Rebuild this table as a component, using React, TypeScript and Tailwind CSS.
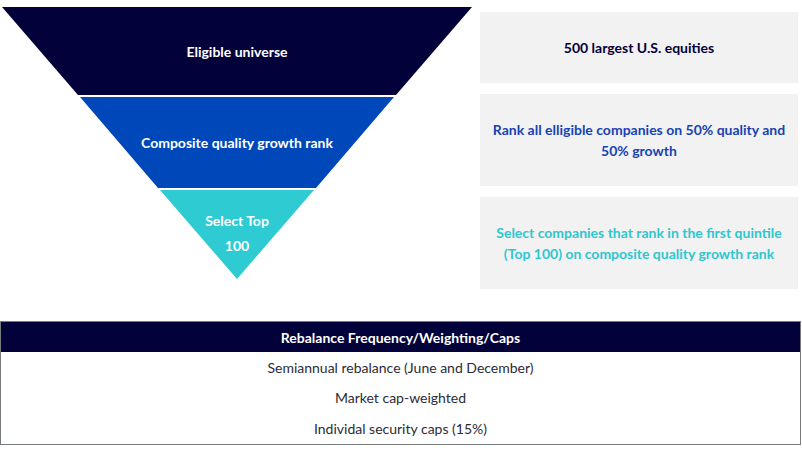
const NAVY = "bg-[#03013a]";

const steps = [
  {
    label: "Eligible universe",
    desc: "500 largest U.S. equities",
    descColor: "text-[#03013a]",
  },
  {
    label: "Composite quality growth rank",
    desc: "Rank all elligible companies on 50% quality and 50% growth",
    descColor: "text-[#1743b3]",
  },
  {
    label: "Select Top 100",
    desc: "Select companies that rank in the first quintile (Top 100) on composite quality growth rank",
    descColor: "text-[#2fc6cf]",
  },
];

const rules = [
  "Semiannual rebalance (June and December)",
  "Market cap-weighted",
  "Individal security caps (15%)",
];

function Funnel() {
  return (
    <div className="flex flex-col gap-[2px] w-[470px] ml-[2px] mt-[7px]">
      <div className={`h-[88px] ${NAVY} flex items-center justify-center [clip-path:polygon(0_0,100%_0,394px_100%,76px_100%)]`}>
        <span className="text-white font-bold text-[14px]">{steps[0].label}</span>
      </div>
      <div className="h-[91px] bg-[#0047ba] flex items-center justify-center [clip-path:polygon(78px_0,392px_0,314px_100%,156px_100%)]">
        <span className="text-white font-bold text-[14px]">{steps[1].label}</span>
      </div>
      <div className="h-[89px] bg-[#2ecbd3] flex items-start justify-center pt-[18px] [clip-path:polygon(158px_0,312px_0,235px_100%)]">
        <span className="text-white font-bold text-[14px] text-center leading-[25px]">
          Select Top
          <br />
          100
        </span>
      </div>
    </div>
  );
}

export default function App() {
  return (
    <div
      className="w-[802px] h-[452px] bg-white overflow-hidden"
      style={{ fontFamily: '"Lato", "Liberation Sans", sans-serif' }}
    >
      <div className="flex">
        <Funnel />
        <div className="ml-[8px] mt-[12px] w-[318px] flex flex-col gap-[11px]">
          <div className="h-[71px] bg-[#f2f2f2] flex items-center justify-center px-3">
            <p className={`font-bold text-[14px] text-center ${steps[0].descColor}`}>{steps[0].desc}</p>
          </div>
          <div className="h-[92px] bg-[#f2f2f2] flex items-center justify-center px-3">
            <p className={`font-bold text-[14px] leading-[21px] text-center ${steps[1].descColor}`}>{steps[1].desc}</p>
          </div>
          <div className="h-[92px] bg-[#f2f2f2] flex items-center justify-center px-3">
            <p className={`font-bold text-[14px] leading-[21px] text-center ${steps[2].descColor}`}>{steps[2].desc}</p>
          </div>
        </div>
      </div>

      {/* Rebalance table */}
      <div className="mt-[32px] w-[801px] border border-[#777b7e]">
        <div className={`h-[30px] ${NAVY} flex items-center justify-center`}>
          <span className="text-white font-bold text-[14px]">Rebalance Frequency/Weighting/Caps</span>
        </div>
        {rules.map((r) => (
          <div key={r} className="h-[30.5px] flex items-center justify-center text-[14px] text-[#2b2b38]">
            {r}
          </div>
        ))}
      </div>
    </div>
  );
}
